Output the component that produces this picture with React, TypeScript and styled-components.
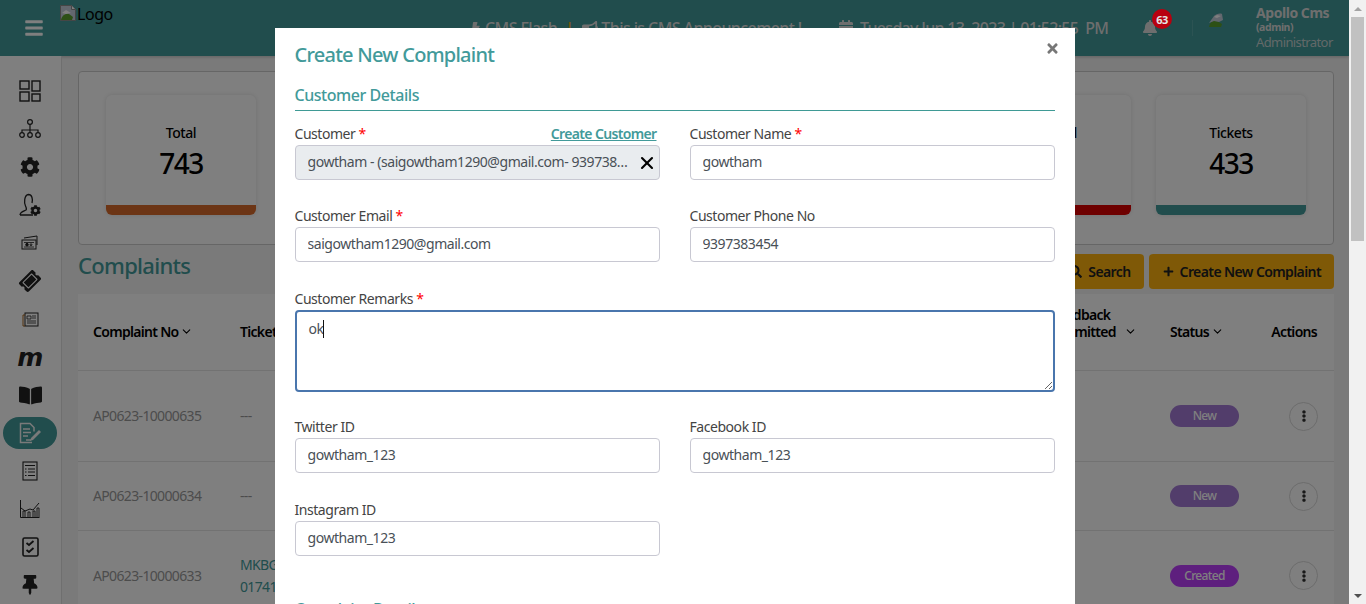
import React from 'react';
import styled, { createGlobalStyle } from 'styled-components';
import {
  FaBars,
  FaBell,
  FaBolt,
  FaBookOpen,
  FaBullhorn,
  FaCalendarAlt,
  FaCog,
  FaEllipsisV,
  FaPlus,
  FaSearch,
  FaThumbtack,
  FaTicketAlt,
  FaTimes,
} from 'react-icons/fa';
import { FiChevronDown } from 'react-icons/fi';
import { X } from 'lucide-react';

const FONT = `'Noto Sans', 'Open Sans', sans-serif`;
const TEAL = '#429a9a';

const GlobalStyle = createGlobalStyle`
  html, body { margin: 0; padding: 0; height: 604px; overflow: hidden; }
  * { box-sizing: border-box; }
  body { font-family: ${FONT}; font-size: 14px; letter-spacing: -0.45px; background: #f1f1f1; }
`;

const Shell = styled.div`
  display: flex;
  width: 1366px;
  height: 604px;
  overflow: hidden;
`;

const Viewport = styled.div`
  position: relative;
  width: 1349px;
  height: 604px;
  overflow: hidden;
  background: #f4f4f4;
`;

const ScrollBar = styled.div`
  width: 17px;
  height: 604px;
  background: #f1f1f1;
  display: flex;
  flex-direction: column;
  align-items: center;
`;

const ScrollArrow = styled.div<{ $up?: boolean }>`
  height: 17px;
  width: 100%;
  display: flex;
  align-items: center;
  justify-content: center;
  &::after {
    content: '';
    border-left: 4px solid transparent;
    border-right: 4px solid transparent;
    ${(p) => (p.$up ? 'border-bottom: 4px solid #a3a3a3;' : 'border-top: 4px solid #505050;')}
  }
`;

const ScrollThumb = styled.div`
  width: 13px;
  height: 224px;
  background: #c1c1c1;
`;

const ScrollTrack = styled.div`
  flex: 1;
`;

const Header = styled.header`
  height: 56px;
  background: ${TEAL};
  display: flex;
  align-items: flex-start;
  color: #e6e6e6;
  box-shadow: 0 1px 3px rgba(0, 0, 0, 0.2);
`;

const Burger = styled.div`
  width: 60px;
  height: 56px;
  padding-left: 24px;
  display: flex;
  align-items: center;
  font-size: 20px;
  color: #fff;
`;

const Logo = styled.div`
  width: 410px;
  padding-top: 5px;
  display: flex;
  align-items: flex-start;
  gap: 1px;
  font-size: 16px;
  line-height: 18px;
  color: #000;
`;

const Marquee = styled.div`
  height: 56px;
  width: 350px;
  display: flex;
  align-items: center;
  gap: 3px;
  font-size: 16px;
  font-weight: 500;
  letter-spacing: -0.6px;
  color: #ddd;
  white-space: nowrap;
`;

const Bar = styled.span`
  color: #ffb30f;
  margin: 0 6px 0 5px;
`;

const Clock = styled(Marquee)`
  width: 322px;
  padding-left: 18px;
  gap: 6px;
  letter-spacing: -0.7px;
`;

const Bell = styled.div`
  width: 50px;
  height: 56px;
  display: flex;
  align-items: center;
  font-size: 16px;
  color: #ddd;
  position: relative;
`;

const Badge = styled.span`
  position: absolute;
  left: 10px;
  top: 9px;
  width: 20px;
  height: 20px;
  border-radius: 50%;
  background: #b8000f;
  color: #e4e4e4;
  font-size: 11px;
  font-weight: 700;
  display: flex;
  align-items: center;
  justify-content: center;
  z-index: 10;
`;

const Divider = styled.div`
  width: 1px;
  height: 16px;
  margin-top: 20px;
  background: rgba(255, 255, 255, 0.12);
`;

const Avatar = styled.div`
  width: 63px;
  padding: 12px 0 0 15px;
`;

const UserInfo = styled.div`
  padding-top: 4px;
  line-height: 15px;
  color: #ddd;
`;

const UserName = styled.div`
  font-weight: 700;
  font-size: 14px;
  line-height: 18px;
`;

const UserRole = styled.div`
  font-size: 10.5px;
  font-weight: 700;
  line-height: 11px;
`;

const UserTitle = styled.div`
  font-size: 13px;
  line-height: 18px;
  letter-spacing: -0.6px;
  opacity: 0.85;
`;

const Body = styled.div`
  display: flex;
  height: 548px;
`;

const SideNav = styled.nav`
  width: 62px;
  flex: none;
  padding-top: 16px;
  background: #fff;
  border-right: 1px solid #dedede;
  display: flex;
  flex-direction: column;
  align-items: stretch;
`;

const NavItem = styled.div<{ $active?: boolean }>`
  height: 38px;
  display: flex;
  align-items: center;
  justify-content: center;
  padding: 0 4px 0 3px;
  font-size: 20px;
  color: #222;
  & > span {
    width: 54px;
    height: 32px;
    border-radius: 16px;
    display: flex;
    align-items: center;
    justify-content: center;
    background: ${(p) => (p.$active ? TEAL : 'transparent')};
    color: ${(p) => (p.$active ? '#f4f4f4' : '#222')};
  }
`;

const MLetter = styled.span`
  font-family: 'DejaVu Sans', sans-serif;
  font-size: 25px;
  font-weight: 700;
  font-style: italic;
  line-height: 1;
`;

const Content = styled.main`
  flex: 1;
  padding: 15px 15px 0 16px;
  min-width: 0;
`;

const StatsBox = styled.section`
  height: 174px;
  border: 1px solid #cdcdcd;
  border-radius: 4px;
  background: #fff;
  padding: 23px 27px;
  display: flex;
  justify-content: space-between;
`;

const StatCard = styled.div`
  width: 150px;
  height: 120px;
  border-radius: 6px;
  background: #fff;
  box-shadow: 0 0 5px rgba(0, 0, 0, 0.12);
  display: flex;
  flex-direction: column;
  align-items: center;
  overflow: hidden;
  padding-top: 28px;
  position: relative;
`;

const StatLabel = styled.div`
  font-size: 14px;
  line-height: 20px;
  font-weight: 500;
  color: #000;
`;

const StatValue = styled.div`
  font-size: 28px;
  line-height: 40px;
  font-weight: 500;
  letter-spacing: -1.5px;
  color: #000;
`;

const StatBar = styled.div<{ $color: string }>`
  position: absolute;
  left: 0;
  right: 0;
  bottom: 0;
  height: 10px;
  background: ${(p) => p.$color};
`;

const TitleRow = styled.div`
  display: flex;
  align-items: flex-start;
  justify-content: space-between;
  height: 35px;
  margin-top: 9px;
`;

const PageTitle = styled.h1`
  margin: 0;
  font-size: 22px;
  line-height: 22px;
  font-weight: 500;
  letter-spacing: -0.7px;
  color: ${TEAL};
`;

const Buttons = styled.div`
  display: flex;
  gap: 5px;
`;

const ActionButton = styled.button`
  height: 35px;
  border: none;
  border-radius: 4px;
  padding: 0 13px 0 14px;
  background: #ffb30f;
  color: #222;
  font-family: ${FONT};
  font-size: 14px;
  font-weight: 600;
  letter-spacing: -0.6px;
  display: flex;
  align-items: center;
  gap: 6px;
`;

const Table = styled.div`
  margin-top: 5px;
  background: #fff;
`;

const TableRow = styled.div<{ $height: number }>`
  height: ${(p) => p.$height}px;
  display: grid;
  grid-template-columns: 147px 1fr 119px 101px 78px;
  align-items: center;
  border-bottom: 1px solid #e4e4e4;
`;

const HeadCell = styled.div<{ $right?: boolean }>`
  padding: 0 ${(p) => (p.$right ? 17 : 15)}px 2px 15px;
  font-weight: 600;
  letter-spacing: -0.7px;
  color: #000;
  line-height: 17px;
  display: flex;
  align-items: center;
  gap: 2px;
  white-space: nowrap;
  justify-content: ${(p) => (p.$right ? 'flex-end' : 'flex-start')};
`;

const TwoLineHead = styled.span`
  margin-top: -17px;
`;

const SortIcon = styled.span`
  display: flex;
  margin-left: 6px;
`;

const Cell = styled.div<{ $link?: boolean }>`
  padding: 0 15px;
  color: ${(p) => (p.$link ? TEAL : '#999')};
  letter-spacing: -0.65px;
  line-height: 22px;
  white-space: nowrap;
`;

const Pill = styled.span<{ $color: string }>`
  display: flex;
  align-items: center;
  justify-content: center;
  width: 69px;
  height: 22px;
  border-radius: 11px;
  background: ${(p) => p.$color};
  color: #fff;
  font-size: 12px;
  font-weight: 500;
`;

const RoundButton = styled.div`
  width: 29px;
  height: 29px;
  margin-left: 33px;
  border-radius: 50%;
  border: 1px solid #d8d8d8;
  display: flex;
  align-items: center;
  justify-content: center;
  font-size: 12px;
  color: #333;
`;

const Backdrop = styled.div`
  position: absolute;
  inset: 0;
  background: rgba(0, 0, 0, 0.5);
  z-index: 5;
  display: flex;
  justify-content: center;
  padding-top: 28px;
  overflow: hidden;
`;

const Modal = styled.div`
  position: relative;
  width: 800px;
  height: 760px;
  flex: none;
  background: #fff;
  padding: 14px 20px;
`;

const CloseIcon = styled.div`
  position: absolute;
  top: 13px;
  right: 15px;
  display: flex;
  font-size: 15px;
  color: #777;
`;

const ModalTitle = styled.h2`
  margin: 0;
  font-size: 20px;
  line-height: 26px;
  font-weight: 500;
  letter-spacing: -0.75px;
  color: ${TEAL};
`;

const SectionTitle = styled.h3`
  margin: 17px 0 14px;
  padding-bottom: 4px;
  font-size: 16px;
  line-height: 21px;
  font-weight: 500;
  color: ${TEAL};
  border-bottom: 1px solid #3f9a95;
`;

const PlainSection = styled(SectionTitle)`
  margin-top: 15px;
  border-bottom: none;
`;

const FormGrid = styled.div`
  display: grid;
  grid-template-columns: 365px 365px;
  grid-template-rows: 82px 83px 128px 83px 83px;
  column-gap: 30px;
`;

const Field = styled.div<{ $wide?: boolean }>`
  grid-column: ${(p) => (p.$wide ? '1 / -1' : 'auto')};
`;

const LabelRow = styled.div`
  display: flex;
  justify-content: space-between;
  padding-right: 3px;
  height: 20px;
  line-height: 18px;
`;

const Label = styled.label`
  color: #444;
`;

const Star = styled.span`
  color: #f00;
`;

const CreateLink = styled.a`
  color: ${TEAL};
  font-weight: 600;
  letter-spacing: -0.65px;
  text-decoration: underline;
`;

const Input = styled.input`
  display: block;
  width: 100%;
  height: 35px;
  padding: 0 12px 2px;
  border: 1px solid #c8c8d2;
  border-radius: 4px;
  outline: none;
  background: #fff;
  color: #495057;
  font-family: ${FONT};
  font-size: 14px;
  letter-spacing: -0.45px;
`;

const SelectBox = styled.div`
  display: flex;
  align-items: center;
  justify-content: space-between;
  height: 35px;
  padding: 0 2px 0 12px;
  border: 1px solid #c8c8d2;
  border-radius: 4px;
  background: #e9ecef;
  color: #495057;
  white-space: nowrap;
`;

const SelectText = styled.span`
  overflow: hidden;
  text-overflow: ellipsis;
  padding-bottom: 2px;
`;

const ClearIcon = styled.span`
  display: flex;
  flex: none;
  margin-left: 3px;
  color: #000;
`;

const RemarksWrap = styled.div`
  position: relative;
`;

const Remarks = styled.textarea`
  display: block;
  width: 100%;
  height: 82px;
  padding: 6px 12px;
  border: 2px solid #4a76ad;
  border-radius: 4px;
  outline: none;
  color: #495057;
  font-family: ${FONT};
  font-size: 14px;
  line-height: 22px;
  letter-spacing: -0.45px;
`;

const Caret = styled.span`
  position: absolute;
  left: 28px;
  top: 10px;
  width: 1px;
  height: 18px;
  background: #111;
`;

const BrokenImage = () => (
  <svg width="16" height="16" viewBox="0 0 16 16">
    <path d="M.5.5h11l4 4v11H.5z" fill="#c4cfdc" stroke="#8c8c8c" />
    <path d="M11.5.5v4h4" fill="#fff" stroke="#8c8c8c" />
    <path d="M1 15c1-5 5-7 8-6l4 3-1 3z" fill="#5aa02c" />
    <path d="M2 8l4-3 5 3-5 1z" fill="#fff" />
  </svg>
);

const AvatarImage = () => (
  <svg width="16" height="16" viewBox="0 0 16 16">
    <path d="M1 15C2 9 6 8 9 9l5 3-1 3z" fill="#5aa02c" />
    <path d="M1 11l5-7c2-2 6-3 8-2l1 6-4 2-5-1z" fill="#c4cfdc" />
    <path d="M6 5l3-2 4 1-4 2z" fill="#fff" />
  </svg>
);

const Dash = () => (
  <svg width="22" height="22" viewBox="0 0 22 22" fill="none" stroke="currentColor" strokeWidth="1.4">
    <rect x="1" y="1" width="9" height="8" />
    <rect x="13" y="1" width="8" height="10" />
    <rect x="1" y="12" width="9" height="9" />
    <rect x="13" y="14" width="8" height="7" />
  </svg>
);

const OrgChart = () => (
  <svg width="22" height="20" viewBox="0 0 22 20" fill="none" stroke="currentColor" strokeWidth="1.2">
    <circle cx="11" cy="3" r="2.4" />
    <path d="M11 5.500V11M3 13.500V11h16v2.500M11 11v2.500" />
    <circle cx="3" cy="16" r="2.3" />
    <circle cx="11" cy="16" r="2.3" />
    <circle cx="19" cy="16" r="2.3" />
  </svg>
);

const UserGear = () => (
  <span style={{ position: 'relative', display: 'inline-flex', width: 22, height: 24 }}>
    <svg width="22" height="24" viewBox="0 0 22 24" fill="none" stroke="currentColor" strokeWidth="1.3">
      <path d="M1 22c0-3 4-4 6-5 1-1 0-3-.5-4C5 10 5 2 9.500 1.500 13 1.500 14 6 13 10M1 22h13" />
    </svg>
    <FaCog style={{ position: 'absolute', right: 0, bottom: 1, fontSize: 11 }} />
  </span>
);

const Cash = () => (
  <svg width="18" height="16" viewBox="0 0 18 16" fill="none" stroke="currentColor" strokeWidth="1">
    <path d="M3 3l13-2v9" />
    <rect x="1" y="5" width="14" height="9" />
    <path d="M3 7.500h10M3 12h10" strokeWidth=".8" />
    <circle cx="6" cy="9.700" r="1.300" fill="currentColor" />
    <circle cx="10" cy="9.700" r=".9" />
  </svg>
);

const News = () => (
  <svg width="17" height="15" viewBox="0 0 17 15" fill="none" stroke="currentColor" strokeWidth="1">
    <rect x="3" y="1" width="13" height="13" />
    <path d="M3 3H1v11h2" stroke="#a5651f" />
    <path d="M5 4h4v3H5zM10 4h4M10 6h4M5 9h9M5 11h9" strokeWidth=".8" />
  </svg>
);

const EditDoc = () => (
  <svg width="24" height="22" viewBox="0 0 24 22" fill="none" stroke="currentColor" strokeWidth="1.500">
    <path d="M14 20.500H2.500V1.500H12l4 4v4" />
    <path d="M5 7h7M5 10.500h8M5 14h5M8 18h5" />
    <path d="M13 16l8-8 2 2-8 8-3 1z" fill="currentColor" stroke="none" />
  </svg>
);

const ListDoc = () => (
  <svg width="16" height="20" viewBox="0 0 16 20" fill="none" stroke="currentColor" strokeWidth="1.100">
    <rect x="1" y="1" width="14" height="18" />
    <path d="M3 4.500h10M6 8h7M6 11h7M6 14.500h7M3 8h1.500M3 11h1.500M3 14.500h1.500" />
  </svg>
);

const ChartIcon = () => (
  <svg width="20" height="18" viewBox="0 0 20 18" fill="none" stroke="currentColor" strokeWidth="1">
    <path d="M.5 0v17.500h19" />
    <path d="M1 8l4 3 5-2 3 1 6-7" />
    <path d="M3 17v-6h2v6M8 17v-5h2v5M13 17v-6h2v6M17 17V8h2v9" strokeWidth=".9" />
  </svg>
);

const Checklist = () => (
  <svg width="17" height="20" viewBox="0 0 17 20" fill="none" stroke="currentColor" strokeWidth="1.600">
    <rect x="1" y="1" width="15" height="18" rx="1.500" />
    <path d="M4.500 6l2.500 2 4.500-4M4.500 13l2.500 2 4.500-4" strokeWidth="1.800" />
  </svg>
);

const navItems: React.ReactNode[] = [
  <Dash />,
  <OrgChart />,
  <FaCog />,
  <UserGear />,
  <Cash />,
  <FaTicketAlt style={{ transform: 'rotate(-45deg)' }} />,
  <News />,
  <MLetter>m</MLetter>,
  <FaBookOpen size={23} />,
  <EditDoc />,
  <ListDoc />,
  <ChartIcon />,
  <Checklist />,
  <FaThumbtack />,
];

const stats = [
  { label: 'Total', value: 743, color: '#d96a2b' },
  { label: 'New', value: 120, color: '#a47ad6' },
  { label: 'Created', value: 96, color: '#7d3cc8' },
  { label: 'Assigned', value: 54, color: '#2a7fd5' },
  { label: 'Closed', value: 28, color: '#38a34a' },
  { label: 'Cancel', value: 12, color: '#dc0000' },
  { label: 'Tickets', value: 433, color: '#429a9a' },
];

const Chevron = () => <FiChevronDown size={13} />;

const App = () => {
  return (
    <Shell>
      <GlobalStyle />
      <Viewport>
        <Header>
          <Burger>
            <FaBars />
          </Burger>
          <Logo>
            <BrokenImage />
            Logo
          </Logo>
          <Marquee>
            <FaBolt size={12} /> CMS Flash <Bar>|</Bar>
            <FaBullhorn size={16} /> This is CMS Announcement !
          </Marquee>
          <Clock>
            <FaCalendarAlt size={16} /> Tuesday Jun 13, 2023 | 01:52:55 &nbsp;PM
          </Clock>
          <Bell>
            <FaBell />
            <Badge>63</Badge>
          </Bell>
          <Divider />
          <Avatar>
            <AvatarImage />
          </Avatar>
          <UserInfo>
            <UserName>Apollo Cms</UserName>
            <UserRole>(admin)</UserRole>
            <UserTitle>Administrator</UserTitle>
          </UserInfo>
        </Header>
        <Body>
          <SideNav>
            {navItems.map((icon, i) => (
              <NavItem key={i} $active={i === 9}>
                <span>{icon}</span>
              </NavItem>
            ))}
          </SideNav>
          <Content>
            <StatsBox>
              {stats.map((s) => (
                <StatCard key={s.label}>
                  <StatLabel>{s.label}</StatLabel>
                  <StatValue>{s.value}</StatValue>
                  <StatBar $color={s.color} />
                </StatCard>
              ))}
            </StatsBox>
            <TitleRow>
              <PageTitle>Complaints</PageTitle>
              <Buttons>
                <ActionButton>
                  <FaSearch size={13} /> Search
                </ActionButton>
                <ActionButton>
                  <FaPlus size={11} /> Create New Complaint
                </ActionButton>
              </Buttons>
            </TitleRow>
            <Table>
              <TableRow $height={77}>
                <HeadCell>
                  Complaint No <Chevron />
                </HeadCell>
                <HeadCell>Ticket No</HeadCell>
                <HeadCell>
                  <TwoLineHead>
                    Feedback
                    <br />
                    Submitted
                  </TwoLineHead>
                  <SortIcon>
                    <Chevron />
                  </SortIcon>
                </HeadCell>
                <HeadCell>
                  Status <Chevron />
                </HeadCell>
                <HeadCell $right>Actions</HeadCell>
              </TableRow>
              <TableRow $height={91}>
                <Cell>AP0623-10000635</Cell>
                <Cell>---</Cell>
                <Cell />
                <Cell>
                  <Pill $color="#a47ad6">New</Pill>
                </Cell>
                <RoundButton>
                  <FaEllipsisV />
                </RoundButton>
              </TableRow>
              <TableRow $height={69}>
                <Cell>AP0623-10000634</Cell>
                <Cell>---</Cell>
                <Cell />
                <Cell>
                  <Pill $color="#a47ad6">New</Pill>
                </Cell>
                <RoundButton>
                  <FaEllipsisV />
                </RoundButton>
              </TableRow>
              <TableRow $height={90}>
                <Cell>AP0623-10000633</Cell>
                <Cell $link>
                  MKBG
                  <br />
                  01741
                </Cell>
                <Cell />
                <Cell>
                  <Pill $color="#bd3ffc">Created</Pill>
                </Cell>
                <RoundButton>
                  <FaEllipsisV />
                </RoundButton>
              </TableRow>
            </Table>
          </Content>
        </Body>
        <Backdrop>
          <Modal>
            <CloseIcon>
              <FaTimes />
            </CloseIcon>
            <ModalTitle>Create New Complaint</ModalTitle>
            <SectionTitle>Customer Details</SectionTitle>
            <FormGrid>
              <Field>
                <LabelRow>
                  <Label>
                    Customer <Star>*</Star>
                  </Label>
                  <CreateLink>Create Customer</CreateLink>
                </LabelRow>
                <SelectBox>
                  <SelectText>gowtham - (saigowtham1290@gmail.com- 9397383454)</SelectText>
                  <ClearIcon>
                    <X size={20} strokeWidth={2.5} />
                  </ClearIcon>
                </SelectBox>
              </Field>
              <Field>
                <LabelRow>
                  <Label>
                    Customer Name <Star>*</Star>
                  </Label>
                </LabelRow>
                <Input readOnly value="gowtham" />
              </Field>
              <Field>
                <LabelRow>
                  <Label>
                    Customer Email <Star>*</Star>
                  </Label>
                </LabelRow>
                <Input readOnly value="saigowtham1290@gmail.com" />
              </Field>
              <Field>
                <LabelRow>
                  <Label>Customer Phone No</Label>
                </LabelRow>
                <Input readOnly value="9397383454" />
              </Field>
              <Field $wide>
                <LabelRow>
                  <Label>
                    Customer Remarks <Star>*</Star>
                  </Label>
                </LabelRow>
                <RemarksWrap>
                  <Remarks readOnly value="ok" />
                  <Caret />
                </RemarksWrap>
              </Field>
              <Field>
                <LabelRow>
                  <Label>Twitter ID</Label>
                </LabelRow>
                <Input readOnly value="gowtham_123" />
              </Field>
              <Field>
                <LabelRow>
                  <Label>Facebook ID</Label>
                </LabelRow>
                <Input readOnly value="gowtham_123" />
              </Field>
              <Field>
                <LabelRow>
                  <Label>Instagram ID</Label>
                </LabelRow>
                <Input readOnly value="gowtham_123" />
              </Field>
            </FormGrid>
            <PlainSection>Complaint Details</PlainSection>
          </Modal>
        </Backdrop>
      </Viewport>
      <ScrollBar>
        <ScrollArrow $up />
        <ScrollThumb />
        <ScrollTrack />
        <ScrollArrow />
      </ScrollBar>
    </Shell>
  );
};

export default App;
